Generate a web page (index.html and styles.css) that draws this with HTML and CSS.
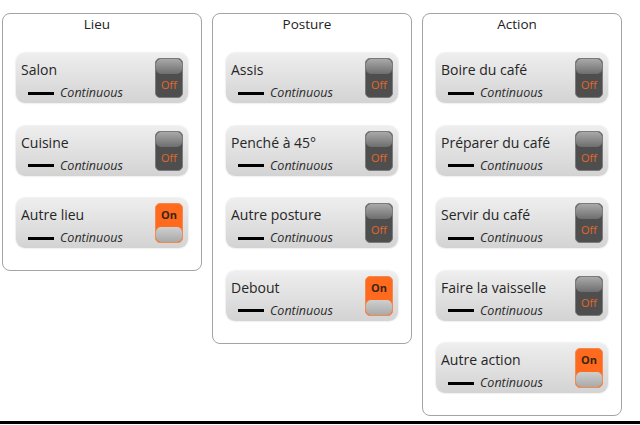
FILE: index.html
```html
<!DOCTYPE html>
<html>
<head>
<meta charset="utf-8">
<link rel="stylesheet" href="styles.css">
</head>
<body>
<div class="screen">
  <div class="panels">
    <section class="panel">
      <h2 class="panel-title">Lieu</h2>
      <div class="cards">
        <div class="card"><div class="info"><div class="label">Salon</div><div class="sub"><span class="bar"></span><span class="mode">Continuous</span></div></div><div class="toggle off"><span class="knob"></span><span class="state">Off</span></div></div>
        <div class="card"><div class="info"><div class="label">Cuisine</div><div class="sub"><span class="bar"></span><span class="mode">Continuous</span></div></div><div class="toggle off"><span class="knob"></span><span class="state">Off</span></div></div>
        <div class="card"><div class="info"><div class="label">Autre lieu</div><div class="sub"><span class="bar"></span><span class="mode">Continuous</span></div></div><div class="toggle on"><span class="state">On</span><span class="knob"></span></div></div>
      </div>
    </section>
    <section class="panel">
      <h2 class="panel-title">Posture</h2>
      <div class="cards">
        <div class="card"><div class="info"><div class="label">Assis</div><div class="sub"><span class="bar"></span><span class="mode">Continuous</span></div></div><div class="toggle off"><span class="knob"></span><span class="state">Off</span></div></div>
        <div class="card"><div class="info"><div class="label">Penché à 45°</div><div class="sub"><span class="bar"></span><span class="mode">Continuous</span></div></div><div class="toggle off"><span class="knob"></span><span class="state">Off</span></div></div>
        <div class="card"><div class="info"><div class="label">Autre posture</div><div class="sub"><span class="bar"></span><span class="mode">Continuous</span></div></div><div class="toggle off"><span class="knob"></span><span class="state">Off</span></div></div>
        <div class="card"><div class="info"><div class="label">Debout</div><div class="sub"><span class="bar"></span><span class="mode">Continuous</span></div></div><div class="toggle on"><span class="state">On</span><span class="knob"></span></div></div>
      </div>
    </section>
    <section class="panel">
      <h2 class="panel-title">Action</h2>
      <div class="cards">
        <div class="card"><div class="info"><div class="label">Boire du café</div><div class="sub"><span class="bar"></span><span class="mode">Continuous</span></div></div><div class="toggle off"><span class="knob"></span><span class="state">Off</span></div></div>
        <div class="card"><div class="info"><div class="label">Préparer du café</div><div class="sub"><span class="bar"></span><span class="mode">Continuous</span></div></div><div class="toggle off"><span class="knob"></span><span class="state">Off</span></div></div>
        <div class="card"><div class="info"><div class="label">Servir du café</div><div class="sub"><span class="bar"></span><span class="mode">Continuous</span></div></div><div class="toggle off"><span class="knob"></span><span class="state">Off</span></div></div>
        <div class="card"><div class="info"><div class="label">Faire la vaisselle</div><div class="sub"><span class="bar"></span><span class="mode">Continuous</span></div></div><div class="toggle off"><span class="knob"></span><span class="state">Off</span></div></div>
        <div class="card"><div class="info"><div class="label">Autre action</div><div class="sub"><span class="bar"></span><span class="mode">Continuous</span></div></div><div class="toggle on"><span class="state">On</span><span class="knob"></span></div></div>
      </div>
    </section>
  </div>
</div>
</body>
</html>
```
FILE: styles.css
```css
html, body {
  margin: 0;
  padding: 0;
  background: #ffffff;
}
body {
  font-family: "Open Sans", "DejaVu Sans", sans-serif;
  color: #2a2a2a;
}
.screen {
  height: 421px;
  border-bottom: 3px solid #000;
  box-sizing: content-box;
  overflow: hidden;
}
.panels {
  display: flex;
  align-items: flex-start;
  gap: 10px;
  padding: 13px 0 0 2px;
}
.panel {
  width: 200px;
  box-sizing: border-box;
  border: 1px solid #a3a3a3;
  border-radius: 8px;
  padding: 0 13px 22px 13px;
}
.panel-title {
  margin: 0 0 20px 0;
  padding: 1px 10px 0 0;
  height: 18px;
  line-height: 18px;
  font-size: 13.5px;
  font-weight: normal;
  text-align: center;
  color: #222;
}
.cards {
  display: flex;
  flex-direction: column;
  gap: 22.5px;
}
.card {
  height: 50px;
  box-sizing: border-box;
  border-radius: 9px;
  background: linear-gradient(#eeeeee, #d3d3d3);
  box-shadow: 0 0 2px rgba(0, 0, 0, 0.2);
  display: flex;
  justify-content: space-between;
  padding: 5px 5px 5px 5px;
}
.info {
  display: flex;
  flex-direction: column;
  padding-top: 3px;
}
.label {
  font-size: 14px;
  line-height: 18px;
  color: #262626;
  white-space: nowrap;
}
.sub {
  display: flex;
  align-items: center;
  margin-top: 6px;
  padding-left: 7px;
  gap: 6px;
  height: 16px;
}
.bar {
  width: 26px;
  height: 3px;
  background: #000;
}
.mode {
  font-style: italic;
  font-size: 12.5px;
  line-height: 16px;
  color: #2a2a2a;
}
.toggle {
  width: 28px;
  height: 40px;
  border-radius: 5px;
  display: flex;
  flex-direction: column;
  justify-content: space-between;
  align-items: center;
  overflow: hidden;
  box-sizing: border-box;
}
.toggle .knob {
  align-self: stretch;
  height: 15px;
  border-radius: 5px;
}
.toggle .state {
  font-size: 11px;
  line-height: 14px;
  height: 14px;
}
.toggle.off {
  background: #4e4e4e;
  border: 1px solid #7a7a7a;
}
.toggle.off .knob {
  background: linear-gradient(#a9a9a9, #6e6e6e);
}
.toggle.off .state {
  color: #e0682c;
  padding-bottom: 5px;
}
.toggle.on {
  background: #ff6a1e;
  border: 1px solid #f28a50;
}
.toggle.on .knob {
  background: linear-gradient(#cfcfcf, #a9a9a9);
}
.toggle.on .state {
  color: #3a2414;
  font-weight: bold;
  padding-top: 4px;
}
```
